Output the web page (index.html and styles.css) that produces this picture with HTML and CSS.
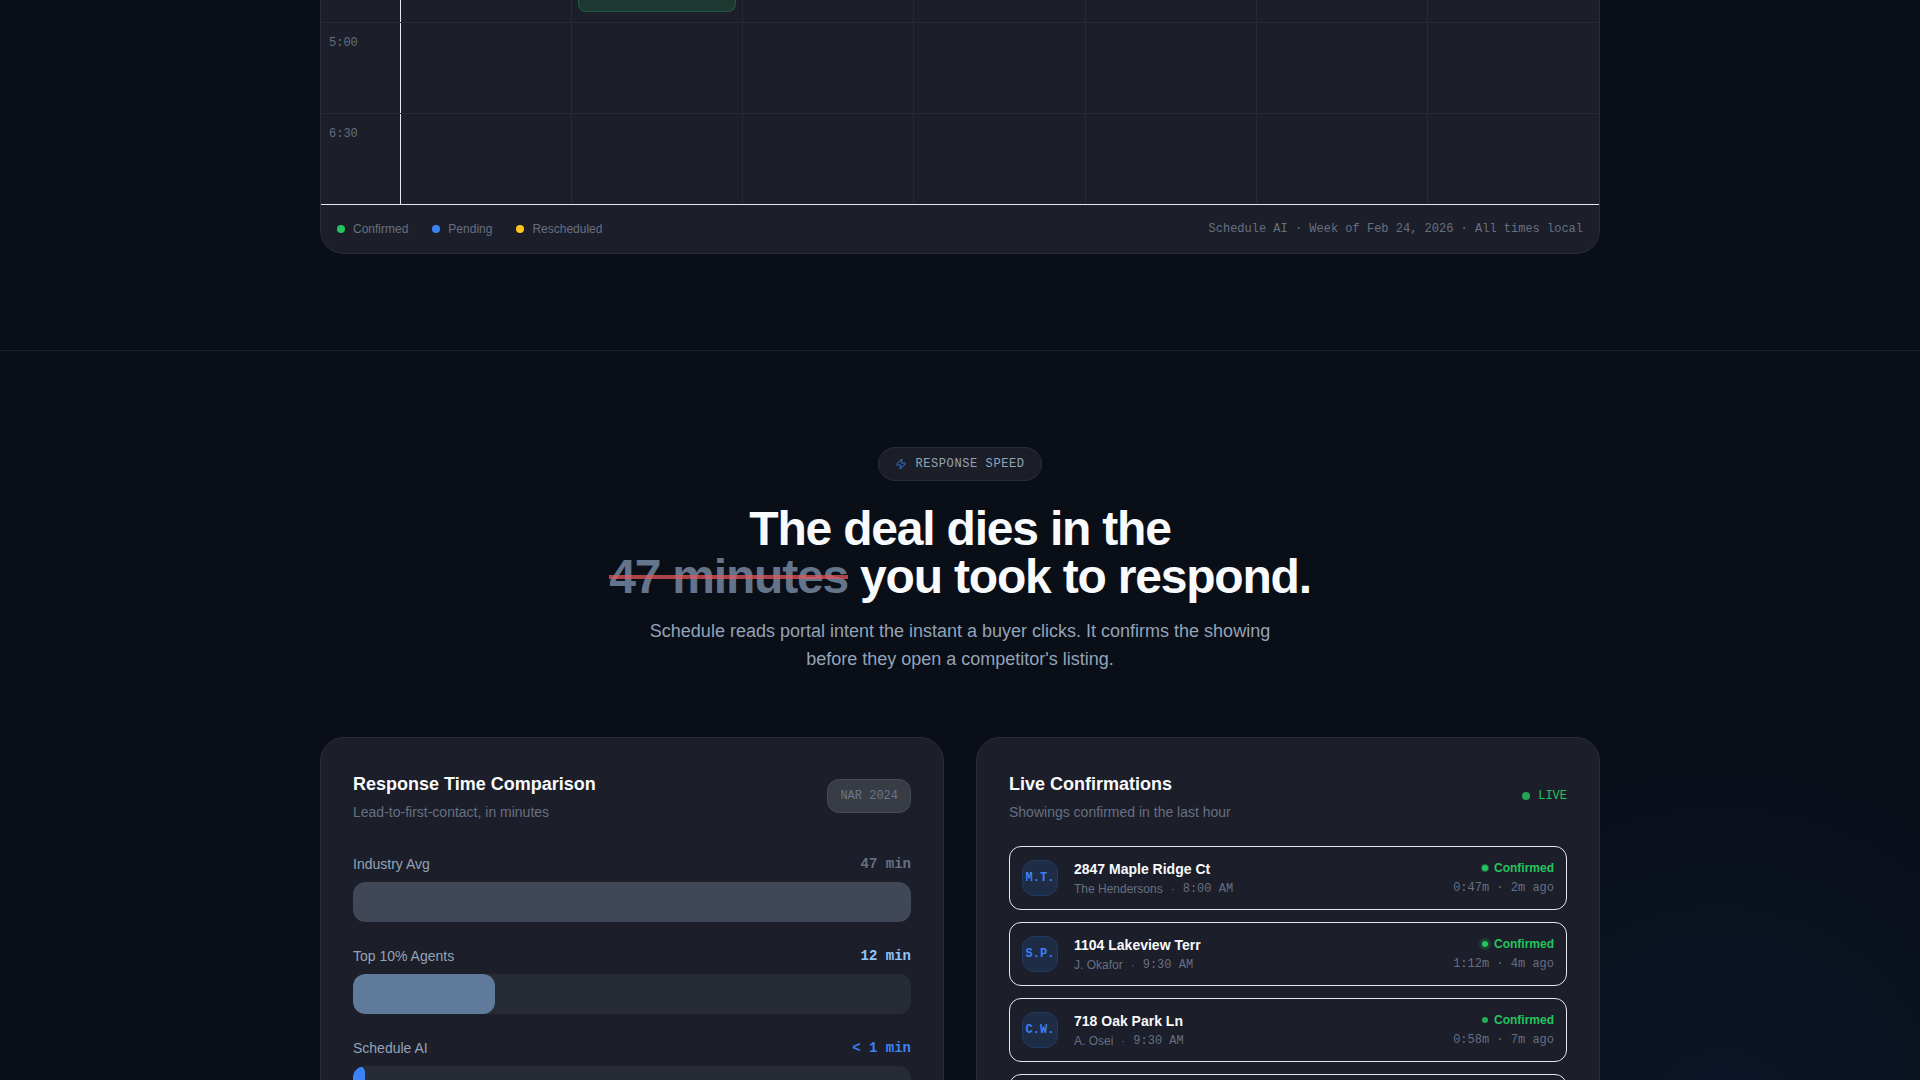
FILE: index.html
```html
<!DOCTYPE html>
<html lang="en">

<head>
    <meta charset="UTF-8">
    <meta name="viewport" content="width=device-width, initial-scale=1.0">
    <title>Schedule AI - Response Speed</title>
    <link rel="stylesheet" href="styles.css">
</head>

<body>
    <section class="section calendar-section">
        <div class="container">
            <div class="calendar">
                <div class="calendar-row calendar-row-first">
                    <div class="calendar-time"></div>
                    <div class="calendar-cell"></div>
                    <div class="calendar-cell"><div class="event"></div></div>
                    <div class="calendar-cell"></div>
                    <div class="calendar-cell"></div>
                    <div class="calendar-cell"></div>
                    <div class="calendar-cell"></div>
                    <div class="calendar-cell"></div>
                </div>
                <div class="calendar-row">
                    <div class="calendar-time">5:00</div>
                    <div class="calendar-cell"></div>
                    <div class="calendar-cell"></div>
                    <div class="calendar-cell"></div>
                    <div class="calendar-cell"></div>
                    <div class="calendar-cell"></div>
                    <div class="calendar-cell"></div>
                    <div class="calendar-cell"></div>
                </div>
                <div class="calendar-row">
                    <div class="calendar-time">6:30</div>
                    <div class="calendar-cell"></div>
                    <div class="calendar-cell"></div>
                    <div class="calendar-cell"></div>
                    <div class="calendar-cell"></div>
                    <div class="calendar-cell"></div>
                    <div class="calendar-cell"></div>
                    <div class="calendar-cell"></div>
                </div>
                <div class="calendar-footer">
                    <div class="legend">
                        <span class="legend-item"><span class="dot dot-green"></span>Confirmed</span>
                        <span class="legend-item"><span class="dot dot-blue"></span>Pending</span>
                        <span class="legend-item"><span class="dot dot-yellow"></span>Rescheduled</span>
                    </div>
                    <span class="calendar-note">Schedule AI · Week of Feb 24, 2026 · All times local</span>
                </div>
            </div>
        </div>
    </section>

    <section class="section speed-section">
        <div class="glow"></div>
        <div class="container">
            <header class="intro">
                <div class="pill">
                    <svg class="pill-icon" viewBox="0 0 24 24" fill="none" stroke="currentColor" stroke-width="2" stroke-linecap="round" stroke-linejoin="round" aria-hidden="true">
                        <path d="M4 14a1 1 0 0 1-.78-1.63l9.9-10.2a.5.5 0 0 1 .86.46l-1.92 6.02A1 1 0 0 0 13 10h7a1 1 0 0 1 .78 1.63l-9.9 10.2a.5.5 0 0 1-.86-.46l1.92-6.02A1 1 0 0 0 11 14z" />
                    </svg>
                    RESPONSE SPEED
                </div>
                <h2 class="intro-title">The deal dies in the<br><span class="struck">47 minutes</span> you took to respond.</h2>
                <p class="intro-text">Schedule reads portal intent the instant a buyer clicks. It confirms the showing before they open a competitor's listing.</p>
            </header>

            <div class="cards">
                <article class="card">
                    <div class="card-header card-header-wide">
                        <div>
                            <h3 class="card-title">Response Time Comparison</h3>
                            <p class="card-subtitle">Lead-to-first-contact, in minutes</p>
                        </div>
                        <span class="source">NAR 2024</span>
                    </div>
                    <div class="bars">
                        <div>
                            <div class="bar-label"><span>Industry Avg</span><span class="bar-value">47 min</span></div>
                            <div class="bar-track"><div class="bar-fill bar-fill-avg" style="width: 100%"></div></div>
                        </div>
                        <div>
                            <div class="bar-label"><span>Top 10% Agents</span><span class="bar-value bar-value-top">12 min</span></div>
                            <div class="bar-track"><div class="bar-fill bar-fill-top" style="width: 25.5%"></div></div>
                        </div>
                        <div>
                            <div class="bar-label"><span>Schedule AI</span><span class="bar-value bar-value-ai">&lt; 1 min</span></div>
                            <div class="bar-track"><div class="bar-fill bar-fill-ai" style="width: 2.1%"></div></div>
                        </div>
                    </div>
                </article>

                <article class="card">
                    <div class="card-header">
                        <div>
                            <h3 class="card-title">Live Confirmations</h3>
                            <p class="card-subtitle">Showings confirmed in the last hour</p>
                        </div>
                        <span class="live"><span class="dot dot-live"></span>LIVE</span>
                    </div>
                    <ul class="feed">
                        <li class="feed-item">
                            <div class="avatar">M.T.</div>
                            <div class="feed-main">
                                <div class="feed-address">2847 Maple Ridge Ct</div>
                                <div class="feed-meta"><span>The Hendersons</span><span class="sep">·</span><span class="mono">8:00 AM</span></div>
                            </div>
                            <div class="feed-side">
                                <div class="status"><span class="status-dot status-dot-near"></span>Confirmed</div>
                                <div class="feed-time">0:47m · 2m ago</div>
                            </div>
                        </li>
                        <li class="feed-item">
                            <div class="avatar">S.P.</div>
                            <div class="feed-main">
                                <div class="feed-address">1104 Lakeview Terr</div>
                                <div class="feed-meta"><span>J. Okafor</span><span class="sep">·</span><span class="mono">9:30 AM</span></div>
                            </div>
                            <div class="feed-side">
                                <div class="status"><span class="status-dot status-dot-far"></span>Confirmed</div>
                                <div class="feed-time">1:12m · 4m ago</div>
                            </div>
                        </li>
                        <li class="feed-item">
                            <div class="avatar">C.W.</div>
                            <div class="feed-main">
                                <div class="feed-address">718 Oak Park Ln</div>
                                <div class="feed-meta"><span>A. Osei</span><span class="sep">·</span><span class="mono">9:30 AM</span></div>
                            </div>
                            <div class="feed-side">
                                <div class="status"><span class="status-dot"></span>Confirmed</div>
                                <div class="feed-time">0:58m · 7m ago</div>
                            </div>
                        </li>
                        <li class="feed-item feed-item-next"></li>
                    </ul>
                </article>
            </div>
        </div>
    </section>
</body>

</html>
```
FILE: styles.css
```css
* {
    box-sizing: border-box;
}

body {
    margin: 0;
    height: 100vh;
    overflow: hidden;
    background-color: #090e17;
    color: #f8fafc;
    font-family: "Liberation Sans", Arial, sans-serif;
    font-size: 14px;
    line-height: 20px;
}

h2,
h3,
p,
ul {
    margin: 0;
    padding: 0;
}

.container {
    position: relative;
    max-width: 1280px;
    margin: 0 auto;
}

.section {
    padding: 96px 24px;
}

/* calendar */
.calendar-section {
    padding-top: 0;
}

.calendar {
    background-color: #1c1f29;
    border: 1px solid #2b2d37;
    border-top: 0;
    border-radius: 0 0 24px 24px;
    overflow: hidden;
}

.calendar-row {
    display: grid;
    grid-template-columns: 80px repeat(7, 1fr);
    min-height: 91px;
    border-bottom: 1px solid #272934;
}

.calendar-row-first {
    min-height: 23px;
}

.calendar-row:nth-child(3) {
    min-height: 90px;
    border-bottom: 0;
}

.calendar-time {
    padding: 12px 8px;
    border-right: 1px solid #e5e7eb;
    color: #667081;
    font-family: "Liberation Mono", "Courier New", monospace;
    font-size: 12px;
    line-height: 16px;
}

.calendar-row-first .calendar-time {
    padding: 0;
}

.calendar-cell {
    border-right: 1px solid #272934;
}

.calendar-cell:last-child {
    border-right: 0;
}

.event {
    height: 12px;
    margin: 0 6px;
    background-color: #1d3830;
    border: 1px solid #1f5a3f;
    border-top: 0;
    border-radius: 0 0 8px 8px;
}

.calendar-footer {
    display: flex;
    align-items: center;
    justify-content: space-between;
    padding: 16px;
    border-top: 1px solid #e5e7eb;
    color: #667081;
    font-size: 12px;
    line-height: 16px;
}

.legend {
    display: flex;
    gap: 24px;
}

.legend-item {
    display: flex;
    align-items: center;
    gap: 8px;
}

.calendar-note,
.mono {
    font-family: "Liberation Mono", "Courier New", monospace;
}

.dot {
    width: 8px;
    height: 8px;
    border-radius: 50%;
}

.dot-green {
    background-color: #22c55e;
}

.dot-blue {
    background-color: #3b82f6;
}

.dot-yellow {
    background-color: #fbc618;
}

.dot-live {
    background-color: #22a655;
}

/* response speed */
.speed-section {
    position: relative;
    border-top: 1px solid #1b1e28;
    overflow: hidden;
}

.glow {
    position: absolute;
    top: 340px;
    right: -240px;
    width: 880px;
    height: 880px;
    background: radial-gradient(circle, rgba(37, 99, 235, 0.08), rgba(37, 99, 235, 0) 70%);
}

.intro {
    display: flex;
    flex-direction: column;
    align-items: center;
    margin-bottom: 64px;
    text-align: center;
}

.pill {
    display: flex;
    align-items: center;
    gap: 8px;
    margin-bottom: 24px;
    padding: 8px 16px;
    background-color: #1b1e27;
    border: 1px solid #2b2d37;
    border-radius: 24px;
    color: #94a3b8;
    font-family: "Liberation Mono", "Courier New", monospace;
    font-size: 12px;
    letter-spacing: 0.05em;
    line-height: 16px;
}

.pill-icon {
    width: 12px;
    height: 12px;
    color: #3473d8;
}

.intro-title {
    margin-bottom: 16px;
    font-size: 48px;
    font-weight: bold;
    letter-spacing: -0.025em;
    line-height: 48px;
}

.struck {
    position: relative;
    color: #64748b;
}

.struck::after {
    content: "";
    position: absolute;
    top: 48%;
    left: 0;
    width: 100%;
    height: 4px;
    background-color: rgba(224, 88, 92, 0.75);
}

.intro-text {
    max-width: 672px;
    color: #94a3b8;
    font-size: 18px;
    line-height: 28px;
}

.cards {
    display: grid;
    grid-template-columns: 1fr 1fr;
    gap: 32px;
}

.card {
    padding: 32px;
    background-color: rgba(29, 32, 42, 0.95);
    border: 1px solid #2b2d37;
    border-radius: 24px;
}

.card-header {
    display: flex;
    align-items: center;
    justify-content: space-between;
    margin-bottom: 24px;
}

.card-header-wide {
    margin-bottom: 32px;
}

.card-title {
    margin-bottom: 4px;
    font-size: 18px;
    font-weight: bold;
    line-height: 28px;
}

.card-subtitle {
    color: #667081;
}

.source {
    padding: 8px 12px;
    background-color: #383c45;
    border: 1px solid #464952;
    border-radius: 12px;
    color: #6b7587;
    font-family: "Liberation Mono", "Courier New", monospace;
    font-size: 12px;
    line-height: 16px;
}

.bars {
    display: flex;
    flex-direction: column;
    gap: 24px;
}

.bar-label {
    display: flex;
    justify-content: space-between;
    margin-bottom: 8px;
    color: #94a3b8;
}

.bar-value {
    color: #667081;
    font-family: "Liberation Mono", "Courier New", monospace;
    font-weight: bold;
}

.bar-value-top {
    color: #93c5fd;
}

.bar-value-ai {
    color: #3b82f6;
}

.bar-track {
    height: 40px;
    background-color: #272b34;
    border-radius: 12px;
    overflow: hidden;
}

.bar-fill {
    height: 100%;
    border-radius: 12px;
}

.bar-fill-avg {
    background-color: #404756;
}

.bar-fill-top {
    background-color: #5f7a9b;
}

.bar-fill-ai {
    background-color: #3b82f6;
}

.live {
    display: flex;
    align-items: center;
    gap: 8px;
    color: #22c55e;
    font-family: "Liberation Mono", "Courier New", monospace;
    font-size: 12px;
    line-height: 16px;
}

.feed {
    display: flex;
    flex-direction: column;
    gap: 12px;
    list-style: none;
}

.feed-item {
    display: flex;
    align-items: center;
    gap: 16px;
    padding: 12px;
    border: 1px solid #e5e7eb;
    border-radius: 12px;
}

.feed-item-next {
    min-height: 64px;
}

.avatar {
    width: 36px;
    height: 36px;
    background-color: #1f2c46;
    border: 1px solid #233a62;
    border-radius: 12px;
    color: #3b82f6;
    font-family: "Liberation Mono", "Courier New", monospace;
    font-size: 12px;
    font-weight: bold;
    line-height: 34px;
    text-align: center;
}

.feed-main {
    flex: 1;
}

.feed-address {
    margin-bottom: 2px;
    font-weight: bold;
}

.feed-meta {
    display: flex;
    gap: 8px;
    color: #667081;
    font-size: 12px;
    line-height: 16px;
}

.sep {
    color: #5c6576;
}

.feed-side {
    font-size: 12px;
    line-height: 16px;
    text-align: right;
}

.status {
    display: flex;
    align-items: center;
    justify-content: flex-end;
    gap: 6px;
    margin-bottom: 4px;
    color: #22c55e;
    font-weight: bold;
}

.status-dot {
    width: 6px;
    height: 6px;
    background-color: #22ad57;
    border-radius: 50%;
}

.status-dot-near {
    background-color: #22c55e;
    box-shadow: 0 0 0 1px rgba(34, 197, 94, 0.4);
}

.status-dot-far {
    background-color: #22c55e;
    box-shadow: 0 0 0 3px rgba(34, 197, 94, 0.2);
}

.feed-time {
    color: #667081;
    font-family: "Liberation Mono", "Courier New", monospace;
}
```
